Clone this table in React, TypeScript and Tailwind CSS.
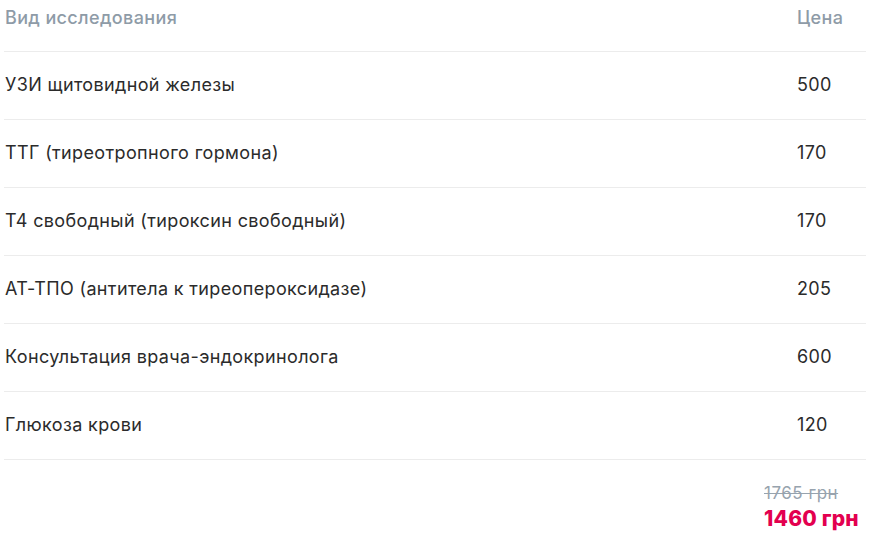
const items = [
  { name: 'УЗИ щитовидной железы', price: 500 },
  { name: 'ТТГ (тиреотропного гормона)', price: 170 },
  { name: 'Т4 свободный (тироксин свободный)', price: 170 },
  { name: 'АТ-ТПО (антитела к тиреопероксидазе)', price: 205 },
  { name: 'Консультация врача-эндокринолога', price: 600 },
  { name: 'Глюкоза крови', price: 120 },
];

export default function App() {
  return (
    <div className="min-h-screen bg-white font-['Inter',sans-serif] text-[#2b2b2b]">
      <div className="pl-[4px] pr-[4px]">
        <div className="flex h-[52px] items-start border-b border-[#ececec] pt-[4px] text-[18px] font-medium tracking-[0.02em] text-[#8e9ba7]">
          <div className="flex-1 pl-[1px]">Вид исследования</div>
          <div className="w-[70px] pl-[1px]">Цена</div>
        </div>
        {items.map((it) => (
          <div
            key={it.name}
            className="flex h-[68px] items-center border-b border-[#ececec] pb-[2px] text-[18px] tracking-[0.02em]"
          >
            <div className="flex-1 pl-[1px]">{it.name}</div>
            <div className="w-[70px] pl-[1px]">{it.price}</div>
          </div>
        ))}
      </div>
      <div className="flex justify-end pt-[23px]">
        <div className="flex w-[106px] flex-col whitespace-nowrap">
          <span className="text-[17px] leading-[20px] tracking-[0.03em] text-[#97a3ae] line-through">1765 грн</span>
          <span className="mt-[4px] text-[21px] font-extrabold leading-[24px] tracking-[0.01em] text-[#e3004f]">1460 грн</span>
        </div>
      </div>
    </div>
  );
}
